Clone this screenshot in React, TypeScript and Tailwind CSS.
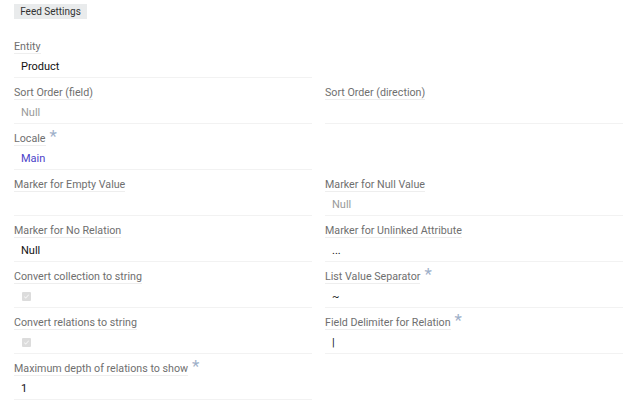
import React from "react";

type Field = {
  label: string;
  required?: boolean;
  value?: string;
  kind?: "text" | "placeholder" | "link" | "check" | "empty";
};

const rows: [Field, Field | null][] = [
  [{ label: "Entity", value: "Product" }, null],
  [
    { label: "Sort Order (field)", value: "Null", kind: "placeholder" },
    { label: "Sort Order (direction)", kind: "empty" },
  ],
  [{ label: "Locale", required: true, value: "Main", kind: "link" }, null],
  [
    { label: "Marker for Empty Value", kind: "empty" },
    { label: "Marker for Null Value", value: "Null", kind: "placeholder" },
  ],
  [
    { label: "Marker for No Relation", value: "Null" },
    { label: "Marker for Unlinked Attribute", value: "..." },
  ],
  [
    { label: "Convert collection to string", kind: "check" },
    { label: "List Value Separator", required: true, value: "~" },
  ],
  [
    { label: "Convert relations to string", kind: "check" },
    { label: "Field Delimiter for Relation", required: true, value: "|" },
  ],
  [{ label: "Maximum depth of relations to show", required: true, value: "1" }, null],
];

const Check = () => (
  <span className="mt-[5px] ml-[1px] flex h-[9px] w-[9px] items-center justify-center rounded-[1px] bg-[#dcdcdc]">
    <svg width="7" height="7" viewBox="0 0 8 8">
      <path d="M1.5 4.2 L3.2 5.8 L6.5 2" fill="none" stroke="#f4f4f4" strokeWidth="1.2" />
    </svg>
  </span>
);

const Cell: React.FC<{ field: Field | null }> = ({ field }) => {
  if (!field) return <div />;
  const kind = field.kind ?? "text";
  return (
    <div className="flex h-[46px] flex-col border-b border-[#f2f2f2] pt-[8px]">
      <div className="flex h-[14px] items-start">
        <span className="border-b border-[#eeeeee] text-[10.7px] leading-[13px] text-[#6f6f6f]">
          {field.label}
        </span>
        {field.required && (
          <span className="ml-[4px] -mt-[3px] text-[17px] leading-[14px] text-[#9eb0c9]">*</span>
        )}
      </div>
      <div className="mt-[3px] h-[20px] pl-[7px] text-[11px] leading-[20px]">
        {kind === "check" ? (
          <Check />
        ) : kind === "placeholder" ? (
          <span className="text-[#9a9a9a]">{field.value}</span>
        ) : kind === "link" ? (
          <span className="text-[#4b43c9]">{field.value}</span>
        ) : kind === "text" ? (
          <span className="text-[#111]">{field.value}</span>
        ) : null}
      </div>
    </div>
  );
};

export default function App() {
  return (
    <div
      className="h-[400px] w-[640px] bg-white px-[14px] pt-[4px]"
      style={{ fontFamily: "Roboto, 'Liberation Sans', sans-serif" }}
    >
      <div className="flex h-[15px] w-[73px] items-center justify-center bg-[#e9ebec] text-[10px] leading-[15px] text-[#333]">
        Feed Settings
      </div>
      <div className="mt-[13px] grid grid-cols-[298px_298px] gap-x-[13px]">
        {rows.map(([l, r], i) => (
          <React.Fragment key={i}>
            <Cell field={l} />
            <Cell field={r} />
          </React.Fragment>
        ))}
      </div>
    </div>
  );
}
